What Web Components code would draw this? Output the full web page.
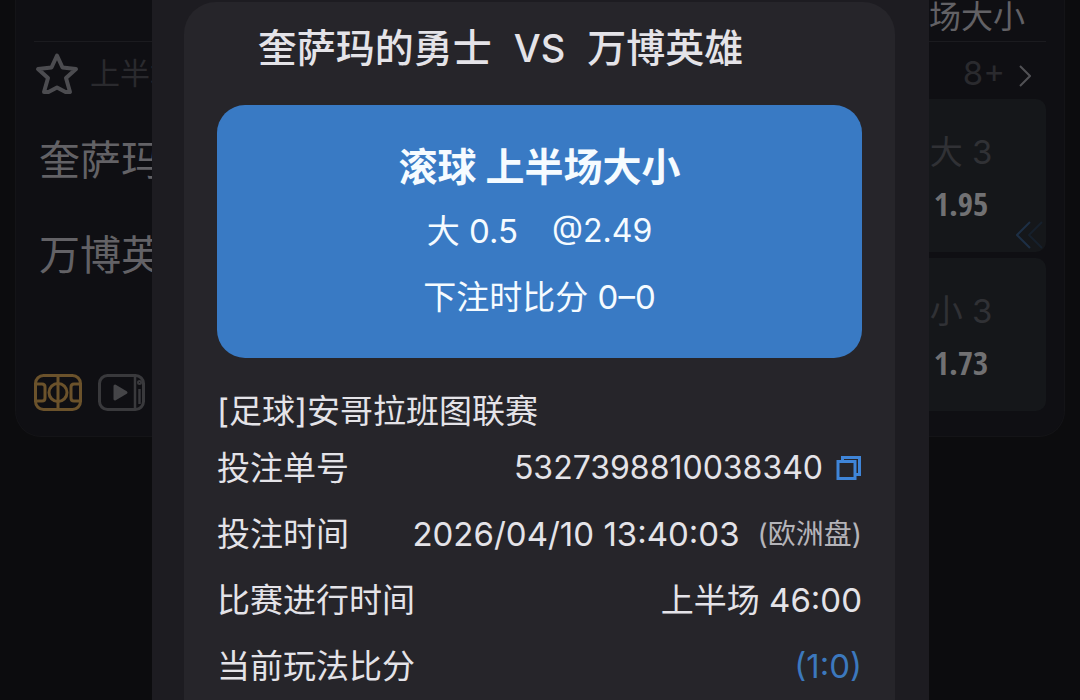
<!DOCTYPE html>
<html lang="zh-CN">
<head>
<meta charset="utf-8">
<meta name="viewport" content="width=device-width, initial-scale=1">
<title>投注详情</title>
<style>
  html, body { height: 100%; }
  body {
    margin: 0;
    overflow: hidden;
    background: #0c0c0e;
    color: #e4e3e8;
    font-family: Inter, "Noto Sans CJK SC", sans-serif;
  }
</style>
</head>
<body>
<bet-page>
  <match-card slot="match" label="场大小" period="上半场" more="8+">
    <team-name slot="teams">奎萨玛</team-name>
    <team-name slot="teams">万博英</team-name>
    <odds-cell slot="odds" line="大 3" price="1.95" moving></odds-cell>
    <odds-cell slot="odds" line="小 3" price="1.73"></odds-cell>
  </match-card>
  <bet-dialog slot="dialog" home="奎萨玛的勇士" away="万博英雄">
    <bet-summary heading="滚球 上半场大小">
      <span slot="pick">大 0.5</span>
      <span slot="price">@2.49</span>
      <span slot="score">下注时比分 0–0</span>
    </bet-summary>
    <league-name>[足球]安哥拉班图联赛</league-name>
    <detail-row label="投注单号" compact>5327398810038340<copy-button slot="extra"></copy-button></detail-row>
    <detail-row label="投注时间">2026/04/10 13:40:03<market-note slot="extra">(欧洲盘)</market-note></detail-row>
    <detail-row label="比赛进行时间">上半场 46:00</detail-row>
    <detail-row label="当前玩法比分" accent>(1:0)</detail-row>
  </bet-dialog>
</bet-page>

<script>
  const define = (name, css, html) => {
    customElements.define(name, class extends HTMLElement {
      constructor() {
        super();
        const markup = typeof html === 'function' ? html(this) : html;
        this.attachShadow({ mode: 'open' }).innerHTML = `<style>${css}</style>${markup}`;
      }
    });
  };
  const attr = (el, name) => el.getAttribute(name) || '';
  const resetButton = 'button { display: block; margin: 0; padding: 0; border: 0; background: none; color: inherit; font: inherit; cursor: pointer; } svg { display: block; }';

  define('bet-page', `
    :host { display: block; position: relative; height: 100%; overflow: hidden; }
    .overlay { position: absolute; inset: 0; padding: 0 151px 0 152px; }
  `, `<slot name="match"></slot><div class="overlay"><slot name="dialog"></slot></div>`);

  define('match-card', `
    ${resetButton}
    :host {
      display: block; margin: 0 15px; padding: 0 18px 25px;
      background: #0f0f13; border: 1px solid #141417; border-top: 0;
      border-radius: 0 0 26px 26px;
    }
    header {
      height: 42px; padding-right: 21px; box-sizing: border-box;
      line-height: 34px; font-size: 32px; text-align: right; color: #626165;
      border-bottom: 1px solid #1b1b1f;
    }
    .bar { display: flex; align-items: center; height: 57px; color: #2a2a2e; font-size: 30px; line-height: 40px; }
    .bar > span { margin-left: 10px; padding-top: 4px; }
    .more { display: flex; align-items: center; gap: 14px; margin-left: auto; padding: 4px 15px 0 0; font-size: 33px; }
    .more svg { padding-top: 6px; }
    .star { padding-top: 6px; }
    .body { display: flex; justify-content: space-between; }
    .left { display: flex; flex-direction: column; justify-content: space-between; padding-top: 14px; }
    .odds { display: flex; flex-direction: column; gap: 6px; width: 170px; }
    .media { display: flex; gap: 16px; }
  `, el => `
    <header>${attr(el, 'label')}</header>
    <div class="bar">
      <button class="star" aria-label="收藏"><svg width="46" height="46" viewBox="0 0 46 46" fill="none" stroke="#4c4c50" stroke-width="4" stroke-linejoin="round"><path d="M23 4.500l5.500 12L42 18l-10 9 4 14h-4.500L23 36.500 14.500 41H10l4-14L4 18l13.500-1.500z"/></svg></button>
      <span>${attr(el, 'period')}</span>
      <button class="more">${attr(el, 'more')}
        <svg width="12" height="22" viewBox="0 0 12 22" fill="none" stroke="#515155" stroke-width="2"><path d="M1 1l10 10L1 21"/></svg>
      </button>
    </div>
    <div class="body">
      <div class="left">
        <div><slot name="teams"></slot></div>
        <div class="media">
          <button aria-label="动画直播"><svg width="48" height="37" viewBox="0 0 48 37" fill="none" stroke="#6b522b" stroke-width="3"><rect x="1.500" y="1.500" width="45" height="34" rx="8"/><path d="M24 1v35M2 10h6q3 0 3 3v11q0 3-3 3H2M46 10h-6q-3 0-3 3v11q0 3 3 3h6"/><circle cx="24" cy="18.500" r="9"/></svg></button>
          <button aria-label="视频直播"><svg width="47" height="37" viewBox="0 0 47 37" fill="none" stroke="#39393c" stroke-width="3"><rect x="1.500" y="1.500" width="44" height="34" rx="8"/><path d="M37 2v33M41.500 15v15" stroke-width="2.500"/><path d="M17 12l11 6.500L17 25z" fill="#454548" stroke="#454548" stroke-linejoin="round"/><circle cx="41.500" cy="8.500" r="1.500" stroke-width="2"/></svg></button>
        </div>
      </div>
      <div class="odds"><slot name="odds"></slot></div>
    </div>`);

  define('team-name', `:host { display: block; height: 95px; padding-left: 5px; line-height: 95px; font-size: 41px; color: #636266; }`, `<slot></slot>`);

  define('odds-cell', `
    ${resetButton}
    :host { display: block; position: relative; }
    button { display: flex; flex-direction: column; align-items: center; justify-content: center; width: 100%; height: 153px; padding-top: 4px; border-radius: 10px; background: #15171a; }
    .line { height: 51px; line-height: 51px; font-size: 33px; color: #303135; }
    .price { height: 51px; line-height: 51px; font-family: "Open Sans Condensed", "Roboto Condensed", Roboto, sans-serif; font-weight: 600; font-size: 33px; color: #717173; }
    .moving { position: absolute; right: 2px; bottom: 3px; }
  `, el => `
    <button><span class="line">${attr(el, 'line')}</span><span class="price">${attr(el, 'price')}</span></button>
    ${el.hasAttribute('moving') ? '<svg class="moving" width="28" height="28" viewBox="0 0 28 28" fill="none" stroke-width="2"><path d="M14 1L1 14l13 13" stroke="#1d2f45"/><path d="M26 1L13 14l13 13" stroke="#16202c"/></svg>' : ''}`);

  define('bet-dialog', `
    :host { display: block; min-height: 100%; box-sizing: border-box; padding: 2px 34px 0 32px; background: #1d1c21; }
    section { min-height: 698px; box-sizing: border-box; padding: 0 33px; border-radius: 32px 32px 0 0; background: #26252a; }
    h1 { display: flex; justify-content: center; gap: 22px; margin: 0 0 11px; padding-right: 78px; height: 92px; line-height: 92px; font-size: 39px; font-weight: 500; white-space: nowrap; }
    .vs { font-size: 38px; }
  `, el => `
    <section role="dialog" aria-label="投注详情">
      <h1><span>${attr(el, 'home')}</span><span class="vs">VS</span><span>${attr(el, 'away')}</span></h1>
      <slot></slot>
    </section>`);

  define('bet-summary', `
    :host { display: block; padding: 29px 0 28px; border-radius: 28px; background: #397ac4; color: #f5fbff; text-align: center; font-size: 33px; }
    h2 { margin: 0; height: 64px; line-height: 66px; font-size: 39px; font-weight: 700; }
    div { display: flex; justify-content: center; gap: 34px; height: 66px; line-height: 66px; }
    slot[name="price"] { font-size: 32px; }
  `, el => `
    <h2>${attr(el, 'heading')}</h2>
    <div><slot name="pick"></slot><slot name="price"></slot></div>
    <div><slot name="score"></slot></div>`);

  define('league-name', `:host { display: block; margin-top: 27px; height: 50px; line-height: 52px; font-size: 33px; }`, `<slot></slot>`);

  define('detail-row', `
    :host { display: flex; align-items: center; justify-content: space-between; height: 66px; line-height: 66px; font-size: 33px; white-space: nowrap; }
    .value { display: flex; align-items: center; }
    :host([compact]) .value { font-size: 32px; }
    :host([accent]) .value { color: #3c78bd; }
  `, el => `<span>${attr(el, 'label')}</span><span class="value"><slot></slot><slot name="extra"></slot></span>`);

  define('market-note', `:host { display: block; margin-left: 18px; font-size: 28px; color: #b5b4b9; }`, `<slot></slot>`);

  define('copy-button', `${resetButton} :host { display: block; margin-left: 13px; }`,
    `<button aria-label="复制单号"><svg width="26" height="26" viewBox="0 0 26 26" fill="none" stroke="#3f85d8" stroke-width="3"><path d="M6.500 6V2.500h17v17H20"/><rect x="2" y="6.500" width="17" height="17"/></svg></button>`);
</script>
</body>
</html>
